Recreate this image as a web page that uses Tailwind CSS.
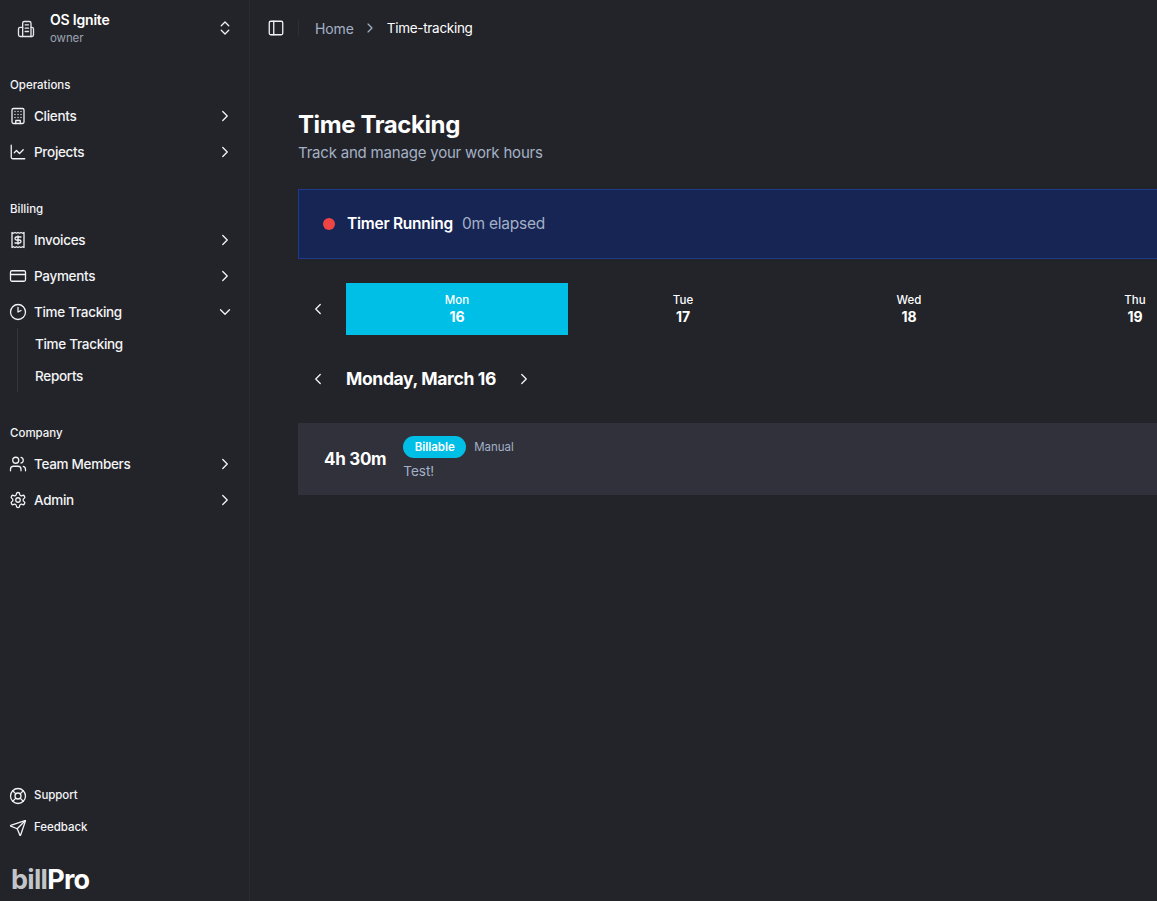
<!DOCTYPE html>
<html lang="en">
<head>
    <meta charset="UTF-8">
    <meta name="viewport" content="width=device-width, initial-scale=1.0">
    <title>Time Tracking</title>
    <script src="https://cdn.jsdelivr.net/npm/@tailwindcss/browser@4"></script>
</head>
<body class="bg-[#23242a] font-['Inter',sans-serif] text-white overflow-hidden">
    <div class="flex h-[901px] w-[1157px] overflow-hidden">
        <!-- Sidebar -->
        <aside class="w-[250px] shrink-0 h-full border-r border-[#2b2c33] flex flex-col">
            <div class="h-[56px] flex items-center pl-[16px] pr-[15px]">
                <svg class="w-5 h-5 shrink-0 mt-[2px]" viewBox="0 0 24 24" fill="none" stroke="#e5e7eb" stroke-width="1.6" stroke-linecap="round" stroke-linejoin="round"><path d="M8 21V5a2 2 0 0 1 2-2h6a2 2 0 0 1 2 2v16z"/><path d="M8 10H5a2 2 0 0 0-2 2v7a2 2 0 0 0 2 2h3"/><path d="M18 10h1a2 2 0 0 1 2 2v7a2 2 0 0 1-2 2h-1"/><path d="M11 7h4M11 11h4M11 15h4"/></svg>
                <div class="ml-[14px] flex-1 pt-[2px]">
                    <div class="text-[14px] leading-[18px] font-semibold tracking-[-0.2px]">OS Ignite</div>
                    <div class="text-[11.5px] leading-[18px] text-[#9ca3af] tracking-[-0.1px]">owner</div>
                </div>
                <svg class="w-[18px] h-[18px]" viewBox="0 0 24 24" fill="none" stroke="#f3f4f6" stroke-width="1.75" stroke-linecap="round" stroke-linejoin="round"><path d="m7 15 5 5 5-5"/><path d="m7 9 5-5 5 5"/></svg>
            </div>

            <div class="pt-[20px] px-[10px]">
                <div class="h-[18px] leading-[18px] text-[11.5px] font-medium text-[#f3f4f6]">Operations</div>
                <div class="mt-[4px] flex flex-col">
                    <div class="h-[36px] flex items-center text-[#f3f4f6]">
                        <svg class="w-[18px] h-[18px] -ml-px" viewBox="0 0 24 24" fill="none" stroke="currentColor" stroke-width="1.7" stroke-linecap="round" stroke-linejoin="round"><rect x="4" y="2" width="16" height="20" rx="2"/><path d="M9 22v-4h6v4M8 6h.01M12 6h.01M16 6h.01M8 10h.01M12 10h.01M16 10h.01M8 14h.01M12 14h.01M16 14h.01"/></svg>
                        <span class="ml-[7px] flex-1 text-[13.5px] font-medium tracking-[-0.3px]">Clients</span>
                        <svg class="w-[18px] h-[18px] mr-[5px]" viewBox="0 0 24 24" fill="none" stroke="currentColor" stroke-width="1.75" stroke-linecap="round" stroke-linejoin="round"><path d="m9 18 6-6-6-6"/></svg>
                    </div>
                    <div class="h-[36px] flex items-center text-[#f3f4f6]">
                        <svg class="w-[18px] h-[18px] -ml-px" viewBox="0 0 24 24" fill="none" stroke="currentColor" stroke-width="1.7" stroke-linecap="round" stroke-linejoin="round"><path d="M3 3v16a2 2 0 0 0 2 2h16"/><path d="m19 9-5 5-4-4-3 3"/></svg>
                        <span class="ml-[7px] flex-1 text-[13.5px] font-medium tracking-[-0.3px]">Projects</span>
                        <svg class="w-[18px] h-[18px] mr-[5px]" viewBox="0 0 24 24" fill="none" stroke="currentColor" stroke-width="1.75" stroke-linecap="round" stroke-linejoin="round"><path d="m9 18 6-6-6-6"/></svg>
                    </div>
                </div>
            </div>

            <div class="pt-[30px] px-[10px]">
                <div class="h-[18px] leading-[18px] text-[11.5px] font-medium text-[#f3f4f6]">Billing</div>
                <div class="mt-[4px] flex flex-col">
                    <div class="h-[36px] flex items-center text-[#f3f4f6]">
                        <svg class="w-[18px] h-[18px] -ml-px" viewBox="0 0 24 24" fill="none" stroke="currentColor" stroke-width="1.7" stroke-linecap="round" stroke-linejoin="round"><path d="M4 2v20l2-1 2 1 2-1 2 1 2-1 2 1 2-1 2 1V2l-2 1-2-1-2 1-2-1-2 1-2-1-2 1Z"/><path d="M16 8h-6a2 2 0 1 0 0 4h4a2 2 0 1 1 0 4H8"/><path d="M12 17.5v-11"/></svg>
                        <span class="ml-[7px] flex-1 text-[13.5px] font-medium tracking-[-0.3px]">Invoices</span>
                        <svg class="w-[18px] h-[18px] mr-[5px]" viewBox="0 0 24 24" fill="none" stroke="currentColor" stroke-width="1.75" stroke-linecap="round" stroke-linejoin="round"><path d="m9 18 6-6-6-6"/></svg>
                    </div>
                    <div class="h-[36px] flex items-center text-[#f3f4f6]">
                        <svg class="w-[18px] h-[18px] -ml-px" viewBox="0 0 24 24" fill="none" stroke="currentColor" stroke-width="1.7" stroke-linecap="round" stroke-linejoin="round"><rect x="2" y="5" width="20" height="14" rx="2"/><path d="M2 10h20"/></svg>
                        <span class="ml-[7px] flex-1 text-[13.5px] font-medium tracking-[-0.3px]">Payments</span>
                        <svg class="w-[18px] h-[18px] mr-[5px]" viewBox="0 0 24 24" fill="none" stroke="currentColor" stroke-width="1.75" stroke-linecap="round" stroke-linejoin="round"><path d="m9 18 6-6-6-6"/></svg>
                    </div>
                    <div class="h-[36px] flex items-center text-[#f3f4f6]">
                        <svg class="w-[18px] h-[18px] -ml-px" viewBox="0 0 24 24" fill="none" stroke="currentColor" stroke-width="1.7" stroke-linecap="round" stroke-linejoin="round"><circle cx="12" cy="12" r="10"/><path d="M12 6v6l4-2"/></svg>
                        <span class="ml-[7px] flex-1 text-[13.5px] font-medium tracking-[-0.3px]">Time Tracking</span>
                        <svg class="w-[18px] h-[18px] mr-[5px]" viewBox="0 0 24 24" fill="none" stroke="currentColor" stroke-width="1.75" stroke-linecap="round" stroke-linejoin="round"><path d="m6 9 6 6 6-6"/></svg>
                    </div>
                    <!-- Submenu -->
                    <div class="ml-[7px] border-l border-[#34353d] pl-[17px] h-[64px] -mt-[2px] text-[13.5px] font-medium tracking-[-0.3px] text-[#f3f4f6]">
                        <div class="h-[32px] leading-[32px]">Time Tracking</div>
                        <div class="h-[32px] leading-[32px]">Reports</div>
                    </div>
                </div>
            </div>

            <div class="pt-[32px] px-[10px]">
                <div class="h-[18px] leading-[18px] text-[11.5px] font-medium text-[#f3f4f6]">Company</div>
                <div class="mt-[4px] flex flex-col">
                    <div class="h-[36px] flex items-center text-[#f3f4f6]">
                        <svg class="w-[18px] h-[18px] -ml-px" viewBox="0 0 24 24" fill="none" stroke="currentColor" stroke-width="1.7" stroke-linecap="round" stroke-linejoin="round"><path d="M16 21v-2a4 4 0 0 0-4-4H6a4 4 0 0 0-4 4v2"/><circle cx="9" cy="7" r="4"/><path d="M22 21v-2a4 4 0 0 0-3-3.87"/><path d="M16 3.13a4 4 0 0 1 0 7.75"/></svg>
                        <span class="ml-[7px] flex-1 text-[13.5px] font-medium tracking-[-0.3px]">Team Members</span>
                        <svg class="w-[18px] h-[18px] mr-[5px]" viewBox="0 0 24 24" fill="none" stroke="currentColor" stroke-width="1.75" stroke-linecap="round" stroke-linejoin="round"><path d="m9 18 6-6-6-6"/></svg>
                    </div>
                    <div class="h-[36px] flex items-center text-[#f3f4f6]">
                        <svg class="w-[18px] h-[18px] -ml-px" viewBox="0 0 24 24" fill="none" stroke="currentColor" stroke-width="1.7" stroke-linecap="round" stroke-linejoin="round"><path d="M12.22 2h-.44a2 2 0 0 0-2 2v.18a2 2 0 0 1-1 1.73l-.43.25a2 2 0 0 1-2 0l-.15-.08a2 2 0 0 0-2.73.73l-.22.38a2 2 0 0 0 .73 2.73l.15.1a2 2 0 0 1 1 1.72v.51a2 2 0 0 1-1 1.74l-.15.09a2 2 0 0 0-.73 2.73l.22.38a2 2 0 0 0 2.73.73l.15-.08a2 2 0 0 1 2 0l.43.25a2 2 0 0 1 1 1.73V20a2 2 0 0 0 2 2h.44a2 2 0 0 0 2-2v-.18a2 2 0 0 1 1-1.73l.43-.25a2 2 0 0 1 2 0l.15.08a2 2 0 0 0 2.73-.73l.22-.39a2 2 0 0 0-.73-2.73l-.15-.08a2 2 0 0 1-1-1.74v-.5a2 2 0 0 1 1-1.74l.15-.09a2 2 0 0 0 .73-2.73l-.22-.38a2 2 0 0 0-2.73-.73l-.15.08a2 2 0 0 1-2 0l-.43-.25a2 2 0 0 1-1-1.73V4a2 2 0 0 0-2-2z"/><circle cx="12" cy="12" r="3"/></svg>
                        <span class="ml-[7px] flex-1 text-[13.5px] font-medium tracking-[-0.3px]">Admin</span>
                        <svg class="w-[18px] h-[18px] mr-[5px]" viewBox="0 0 24 24" fill="none" stroke="currentColor" stroke-width="1.75" stroke-linecap="round" stroke-linejoin="round"><path d="m9 18 6-6-6-6"/></svg>
                    </div>
                </div>
            </div>

            <!-- Bottom links -->
            <div class="mt-auto px-[10px]">
                <div class="h-[32px] flex items-center text-[#f3f4f6]">
                    <svg class="w-[18px] h-[18px] -ml-px" viewBox="0 0 24 24" fill="none" stroke="currentColor" stroke-width="1.7" stroke-linecap="round" stroke-linejoin="round"><circle cx="12" cy="12" r="10"/><circle cx="12" cy="12" r="4"/><path d="m4.93 4.93 4.24 4.24M14.83 9.17l4.24-4.24M14.83 14.83l4.24 4.24M9.17 14.83l-4.24 4.24"/></svg>
                    <span class="ml-[7px] text-[11.5px] font-medium tracking-[-0.05px]">Support</span>
                </div>
                <div class="h-[32px] flex items-center text-[#f3f4f6]">
                    <svg class="w-[18px] h-[18px] -ml-px" viewBox="0 0 24 24" fill="none" stroke="currentColor" stroke-width="1.7" stroke-linecap="round" stroke-linejoin="round"><path d="M14.5 21.7a.5.5 0 0 0 .9 0l6.5-19a.5.5 0 0 0-.6-.6l-19 6.5a.5.5 0 0 0 0 .9l7.9 3.2a2 2 0 0 1 1.1 1.1z"/><path d="M21.9 2.1 10.9 13.1"/></svg>
                    <span class="ml-[7px] text-[11.5px] font-medium tracking-[-0.05px]">Feedback</span>
                </div>
            </div>
            <div class="h-[57px] pl-[11px] pt-[20px] text-[27px] leading-[32px] font-bold tracking-[-0.7px]">
                <span class="text-[#c4c5c8]">bill</span><span class="text-white">Pro</span>
            </div>
        </aside>

        <!-- Main -->
        <main class="flex-1 min-w-0 overflow-hidden">
            <header class="h-[56px] flex items-center pl-[17px]">
                <svg class="w-[18px] h-[18px]" viewBox="0 0 24 24" fill="none" stroke="#f3f4f6" stroke-width="1.7" stroke-linecap="round" stroke-linejoin="round"><rect x="3" y="3" width="18" height="18" rx="2"/><path d="M9 3v18"/></svg>
                <div class="ml-[13px] w-px h-4 bg-[#2e2f36]"></div>
                <span class="ml-[16px] text-[14px] text-[#a3b1c6] tracking-[-0.1px]">Home</span>
                <svg class="ml-[8px] w-4 h-4" viewBox="0 0 24 24" fill="none" stroke="#a3b1c6" stroke-width="1.75" stroke-linecap="round" stroke-linejoin="round"><path d="m9 18 6-6-6-6"/></svg>
                <span class="ml-[9px] text-[13.5px] text-white tracking-[-0.3px]">Time-tracking</span>
            </header>

            <div class="pl-[48px] pt-[53px] w-[1100px]">
                <h1 class="text-[24px] leading-[32px] font-bold tracking-[-0.4px]">Time Tracking</h1>
                <p class="text-[15px] leading-[24px] text-[#a3b1c6] tracking-[-0.2px]">Track and manage your work hours</p>

                <div class="mt-[24px] h-[70px] border border-[#1e3a8a] bg-[#172554] flex items-center pl-[24px]">
                    <span class="w-3 h-3 rounded-full bg-[#ef4444]"></span>
                    <span class="ml-3 text-[15.5px] font-semibold tracking-[-0.25px]">Timer Running</span>
                    <span class="ml-[9px] text-[15.5px] text-[#a3b1c6] tracking-[-0.25px]">0m elapsed</span>
                </div>

                <!-- Day strip -->
                <div class="mt-[24px] flex items-center">
                    <div class="w-[40px] flex pl-[11px] shrink-0">
                        <svg class="w-[18px] h-[18px]" viewBox="0 0 24 24" fill="none" stroke="#f3f4f6" stroke-width="1.75" stroke-linecap="round" stroke-linejoin="round"><path d="m15 18-6-6 6-6"/></svg>
                    </div>
                    <div class="ml-[8px] flex gap-[4px]">
                        <div class="w-[222px] h-[52px] bg-[#00bfe7] flex flex-col items-center justify-center">
                            <span class="text-[11.5px] leading-[16px] font-medium">Mon</span>
                            <span class="text-[14px] leading-[20px] font-bold -mt-px">16</span>
                        </div>
                        <div class="w-[222px] h-[52px] flex flex-col items-center justify-center">
                            <span class="text-[11.5px] leading-[16px] font-medium">Tue</span>
                            <span class="text-[14px] leading-[20px] font-bold -mt-px">17</span>
                        </div>
                        <div class="w-[222px] h-[52px] flex flex-col items-center justify-center">
                            <span class="text-[11.5px] leading-[16px] font-medium">Wed</span>
                            <span class="text-[14px] leading-[20px] font-bold -mt-px">18</span>
                        </div>
                        <div class="w-[222px] h-[52px] flex flex-col items-center justify-center">
                            <span class="text-[11.5px] leading-[16px] font-medium">Thu</span>
                            <span class="text-[14px] leading-[20px] font-bold -mt-px">19</span>
                        </div>
                    </div>
                </div>

                <!-- Date row -->
                <div class="mt-[24px] h-[40px] flex items-center">
                    <div class="w-[48px] flex pl-[11px] shrink-0">
                        <svg class="w-[18px] h-[18px]" viewBox="0 0 24 24" fill="none" stroke="#f3f4f6" stroke-width="1.75" stroke-linecap="round" stroke-linejoin="round"><path d="m15 18-6-6 6-6"/></svg>
                    </div>
                    <span class="text-[17.5px] font-bold tracking-[-0.35px] pt-[1px]">Monday, March 16</span>
                    <svg class="ml-[19px] w-[18px] h-[18px]" viewBox="0 0 24 24" fill="none" stroke="#f3f4f6" stroke-width="1.75" stroke-linecap="round" stroke-linejoin="round"><path d="m9 18 6-6-6-6"/></svg>
                </div>

                <!-- Entry -->
                <div class="mt-[24px] h-[72px] bg-[#30313b] flex items-start pl-[26px]">
                    <span class="mt-[24px] text-[17px] leading-[24px] font-bold tracking-[-0.3px]">4h 30m</span>
                    <div class="ml-[17px] pt-[13px]">
                        <div class="flex items-center">
                            <span class="h-[22px] w-[63px] rounded-full bg-[#00bfe7] flex items-center justify-center pt-px text-[11.5px] font-semibold">Billable</span>
                            <span class="ml-2 pt-px text-[11.5px] text-[#a3b1c6] tracking-[-0.05px]">Manual</span>
                        </div>
                        <div class="mt-[1px] text-[13.5px] leading-[24px] text-[#a3b1c6]">Test!</div>
                    </div>
                </div>
            </div>
        </main>
    </div>
</body>
</html>
